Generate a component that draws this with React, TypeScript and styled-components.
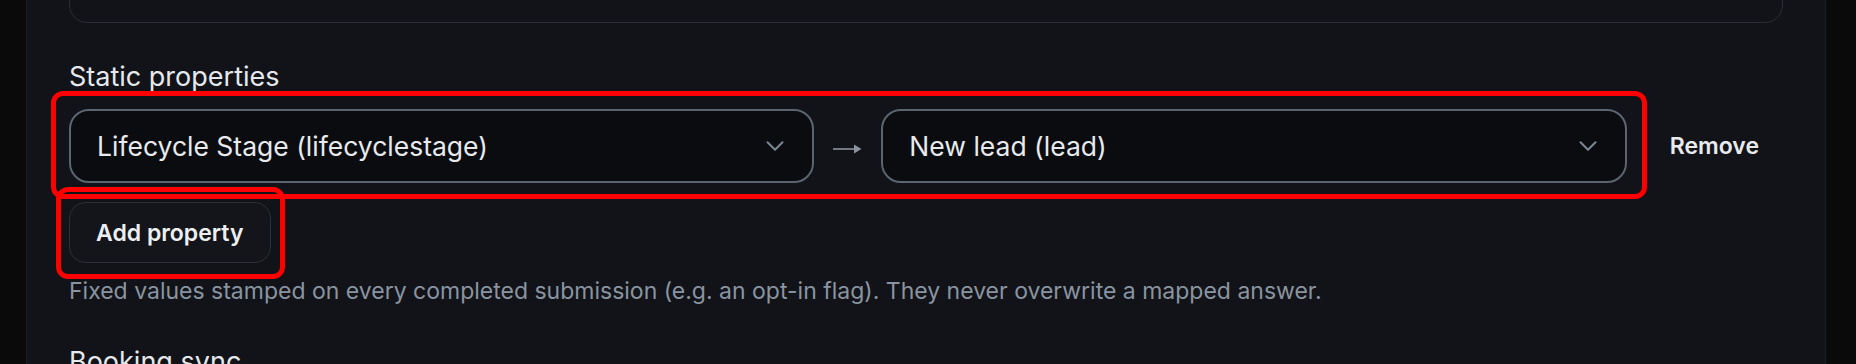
import styled, { createGlobalStyle } from "styled-components";
import { ChevronDown } from "lucide-react";

const GlobalStyle = createGlobalStyle`
  html, body {
    margin: 0;
    padding: 0;
    background: #0a0a0b;
  }
  body {
    font-family: Inter, "Noto Sans", "Liberation Sans", sans-serif;
    -webkit-font-smoothing: antialiased;
  }
  * {
    box-sizing: border-box;
  }
`;

const Shell = styled.div`
  display: flex;
  height: 364px;
  overflow: hidden;
  background: #0a0a0b;
`;

const SideStrip = styled.div<{ $width: number }>`
  flex: none;
  width: ${(p) => p.$width}px;
`;

const Panel = styled.main`
  flex: 1;
  min-width: 0;
  background: #111318;
  border-left: 1px solid #1c1f24;
  border-right: 1px solid #1c1f24;
  padding: 0 42px;
  overflow: hidden;
`;

const PrevCard = styled.div`
  height: 80px;
  margin-top: -57px;
  border: 1px solid #2a2e35;
  border-radius: 18px;
`;

const Section = styled.section`
  margin-top: 37px;
`;

const SectionTitle = styled.h3`
  margin: 0 0 15px;
  font-size: 27px;
  line-height: 34px;
  font-weight: 400;
  color: #e6e8eb;
`;

const Row = styled.div`
  display: flex;
  align-items: center;
  gap: 19px;
  height: 74px;
`;

const Highlight = styled.div<{ $t: number; $r: number; $b: number; $l: number }>`
  position: relative;
  &::after {
    content: "";
    position: absolute;
    top: ${(p) => p.$t}px;
    right: ${(p) => p.$r}px;
    bottom: ${(p) => p.$b}px;
    left: ${(p) => p.$l}px;
    border: 5px solid #ff0000;
    border-radius: 12px;
    pointer-events: none;
  }
`;

const Pair = styled(Highlight)`
  flex: 1;
  display: flex;
  align-items: center;
  gap: 19px;
  height: 74px;
`;

const Select = styled.div`
  flex: 1;
  min-width: 0;
  height: 74px;
  display: flex;
  align-items: center;
  justify-content: space-between;
  padding: 0 22px 0 26px;
  border: 2px solid #5a6570;
  border-radius: 20px;
  background: #0b0c0f;
  color: #e8eaed;
  font-size: 26.5px;
  white-space: nowrap;
  svg {
    flex: none;
    color: #7b8591;
  }
`;

const Arrow = styled.svg`
  flex: none;
  width: 29px;
  height: 12px;
  margin-top: 6px;
  color: #8a939e;
`;

const TextButton = styled.button`
  flex: none;
  height: 74px;
  padding: 0 24px;
  border: none;
  background: none;
  color: #e8eaed;
  font-family: inherit;
  font-size: 23px;
  font-weight: 600;
`;

const AddWrap = styled(Highlight)`
  display: inline-flex;
  margin-top: 19px;
`;

const OutlineButton = styled.button`
  height: 61px;
  padding: 0 26px;
  border: 1px solid #2b2f36;
  border-radius: 16px;
  background: #13151a;
  color: #eceef0;
  font-family: inherit;
  font-size: 23px;
  font-weight: 600;
`;

const Hint = styled.p`
  margin: 12px 0 0;
  font-size: 23px;
  line-height: 33px;
  color: #8a94a0;
  white-space: nowrap;
`;

export default function App() {
  return (
    <>
      <GlobalStyle />
      <Shell>
        <SideStrip $width={26} />
        <Panel>
          <PrevCard />
          <Section>
            <SectionTitle>Static properties</SectionTitle>
            <Row>
              <Pair $t={-18} $r={-20} $b={-16} $l={-18}>
                <Select>
                  <span>Lifecycle Stage (lifecyclestage)</span>
                  <ChevronDown size={30} strokeWidth={1.6} />
                </Select>
                <Arrow viewBox="0 0 29 12" aria-hidden="true">
                  <line x1="0" y1="6" x2="27" y2="6" stroke="currentColor" strokeWidth="1.6" />
                  <path d="M21 1.5 L28.5 6 L21 10.5 Z" fill="currentColor" />
                </Arrow>
                <Select>
                  <span>New lead (lead)</span>
                  <ChevronDown size={30} strokeWidth={1.6} />
                </Select>
              </Pair>
              <TextButton>Remove</TextButton>
            </Row>
            <AddWrap $t={-15} $r={-14} $b={-16} $l={-13}>
              <OutlineButton>Add property</OutlineButton>
            </AddWrap>
            <Hint>
              Fixed values stamped on every completed submission (e.g. an opt-in flag). They never
              overwrite a mapped answer.
            </Hint>
          </Section>
          <Section>
            <SectionTitle>Booking sync</SectionTitle>
          </Section>
        </Panel>
        <SideStrip $width={30} />
      </Shell>
    </>
  );
}
